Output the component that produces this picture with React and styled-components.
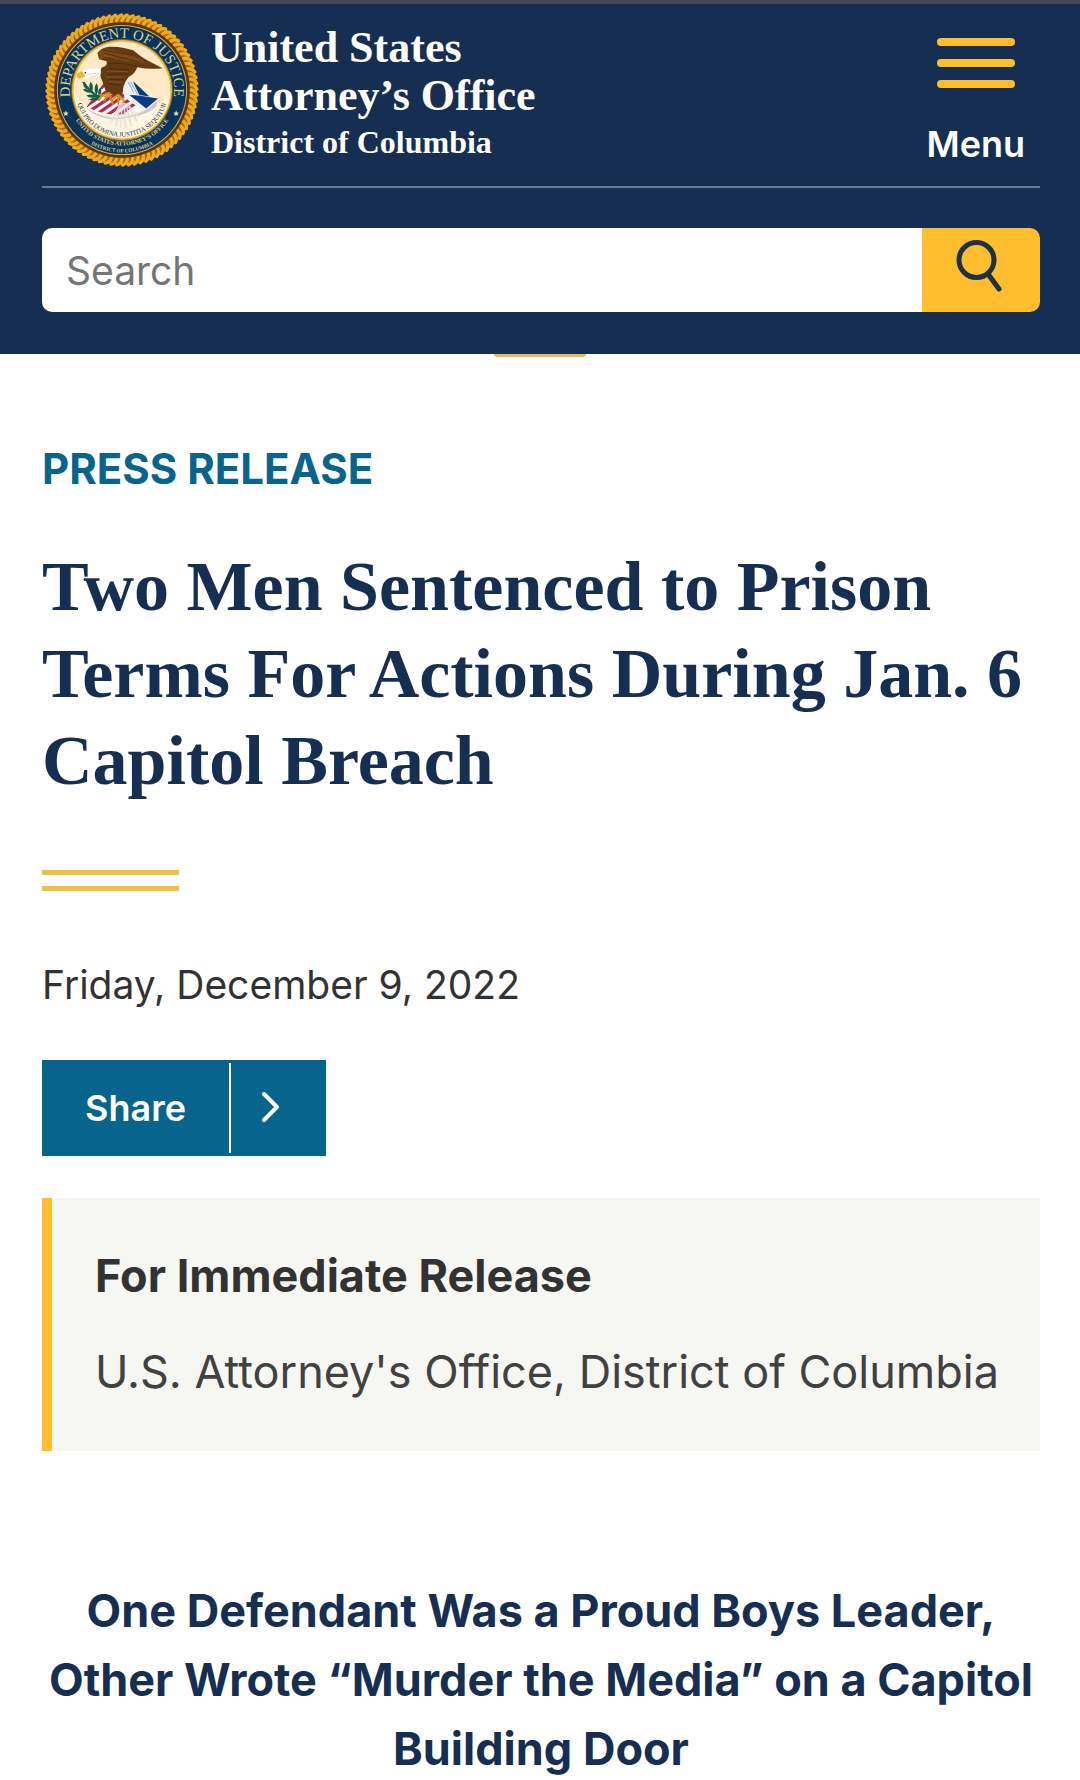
import React from "react";
import styled, { createGlobalStyle } from "styled-components";

const sans = `Inter, "Liberation Sans", sans-serif`;
const serif = `"Liberation Serif", "Times New Roman", serif`;

const color = {
  navy: "#162e51",
  gold: "#ffbe2e",
  teal: "#07648d",
  ink: "#323232",
};

const GlobalStyle = createGlobalStyle`
  *, *::before, *::after { box-sizing: border-box; }
  body { margin: 0; background: #fff; font-family: ${sans}; color: ${color.ink}; }
  h1, h2, p { margin: 0; }
`;

const Header = styled.header`
  background: ${color.navy};
  border-top: 4px solid #454759;
  padding: 0 40px 42px 42px;
`;

const Masthead = styled.div`
  display: flex;
  justify-content: space-between;
  align-items: flex-start;
  height: 184px;
  border-bottom: 2px solid #6d7c94;
`;

const Brand = styled.a`
  display: flex;
  gap: 12px;
  padding: 8px 0 0 3px;
  color: #fff;
  text-decoration: none;
`;

const SealSvg = styled.svg`
  display: block;
  width: 154px;
  height: 156px;
  flex: none;
`;

const BrandText = styled.span`
  display: flex;
  flex-direction: column;
  padding-top: 12px;
  font-family: ${serif};
  font-weight: 700;
`;

const OfficeName = styled.span`
  font-size: 44px;
  line-height: 48px;
`;

const DistrictName = styled.span`
  font-size: 32px;
  line-height: 44px;
`;

const MenuButton = styled.button`
  display: flex;
  flex-direction: column;
  align-items: center;
  gap: 34px;
  margin: 0;
  padding: 34px 15px 0;
  border: 0;
  background: none;
  color: #fff;
  font-family: ${sans};
  font-size: 36px;
  font-weight: 600;
  line-height: 44px;
`;

const MenuBars = styled.span`
  display: flex;
  flex-direction: column;
  gap: 13px;
`;

const MenuBar = styled.span`
  width: 78px;
  height: 8px;
  border-radius: 4px;
  background: ${color.gold};
`;

const SearchForm = styled.form`
  display: flex;
  height: 84px;
  margin-top: 40px;
  border-radius: 10px;
  overflow: hidden;
`;

const SearchInput = styled.input`
  flex: 1;
  min-width: 0;
  border: 0;
  padding: 0 24px;
  background: #fff;
  color: ${color.ink};
  font-family: ${sans};
  font-size: 39px;
  &::placeholder { color: #757575; opacity: 1; }
`;

const SearchButton = styled.button`
  padding: 12px 0 0 34px;
  width: 118px;
  border: 0;
  background: ${color.gold};
  color: #1f3040;
`;

const SearchIcon = styled.svg`
  display: block;
  width: 46px;
  height: 72px;
`;

const Tab = styled.div`
  width: 92px;
  height: 3px;
  margin: 0 auto;
  border-radius: 0 0 3px 3px;
  background: #e5bd58;
`;

const Main = styled.main`
  padding: 86px 40px 0 42px;
`;

const Kicker = styled.p`
  color: ${color.teal};
  font-size: 42px;
  font-weight: 700;
  line-height: 52px;
`;

const Title = styled.h1`
  margin-top: 48px;
  color: ${color.navy};
  font-family: ${serif};
  font-size: 70px;
  font-weight: 700;
  line-height: 87px;
`;

const DoubleRule = styled.div`
  width: 137px;
  height: 21px;
  margin-top: 66px;
  border: solid #f2be3c;
  border-width: 5px 0;
`;

const PostDate = styled.p`
  margin-top: 68px;
  font-size: 39px;
  line-height: 52px;
`;

const ShareButton = styled.button`
  display: flex;
  align-items: center;
  height: 96px;
  margin-top: 49px;
  padding: 3px 0;
  border: 0;
  background: ${color.teal};
  color: #fff;
  font-family: ${sans};
  font-size: 36px;
  font-weight: 600;
`;

const ShareLabel = styled.span`
  display: flex;
  align-items: center;
  height: 100%;
  padding: 0 43px;
  border-right: 2px solid #fff;
`;

const ShareArrow = styled.svg`
  display: block;
  width: 95px;
  height: 36px;
`;

const Notice = styled.section`
  margin-top: 42px;
  padding: 48px 40px 49px 43px;
  border-left: 10px solid ${color.gold};
  background: #f6f6f2;
`;

const NoticeTitle = styled.h2`
  font-size: 45px;
  font-weight: 700;
  line-height: 60px;
`;

const NoticeText = styled.p`
  margin-top: 36px;
  color: #414141;
  font-size: 45px;
  line-height: 60px;
`;

const Subtitle = styled.h2`
  margin-top: 125px;
  color: ${color.navy};
  font-size: 45px;
  font-weight: 700;
  line-height: 69px;
  text-align: center;
`;

const polar = (r, deg) => {
  const a = (deg * Math.PI) / 180;
  return `${(279 + r * Math.cos(a)).toFixed(1)} ${(271 + r * Math.sin(a)).toFixed(1)}`;
};

const strands = Array.from({ length: 80 }, (_, i) => {
  const a = i * 4.5;
  return `M${polar(209, a)} Q${polar(222, a + 0.5)} ${polar(227, a + 4)}`;
}).join(" ");

function Seal() {
  return (
    <SealSvg viewBox="46 38 466 466" role="img" aria-label="Department of Justice seal">
      <defs>
        <path id="arcTitle" d={`M${polar(158, 150)} A158 158 0 1 1 ${polar(158, 30)}`} />
        <path id="arcName" d="M111 271 A168 168 0 0 0 447 271" />
        <path id="arcDistrict" d="M90 271 A189 189 0 0 0 468 271" />
        <path id="arcMotto" d={`M${polar(141, 200)} A141 141 0 1 0 ${polar(141, -20)}`} />
        <clipPath id="shieldClip">
          <path d="M172 322 L222 252 L296 258 L388 297 Q368 328 306 343 Q230 354 172 322Z" />
        </clipPath>
      </defs>
      <circle cx="279" cy="271" r="227" fill="#a8690f" />
      <path d={strands} fill="none" stroke="#eeaa1f" strokeWidth="10" strokeLinecap="round" />
      <circle cx="279" cy="271" r="205" fill="#5c3410" />
      <circle cx="279" cy="271" r="197" fill="#d3b24c" />
      <circle cx="279" cy="271" r="194" fill="#06345c" />
      <circle cx="279" cy="271" r="154" fill="#8a6a22" />
      <circle cx="279" cy="271" r="151" fill="#efba3a" />
      <circle cx="279" cy="271" r="146" fill="#ffe9c6" />
      <path d="M133 271 A146 146 0 0 0 425 271 Q400 340 279 350 Q158 340 133 271Z" fill="#fff6e2" />

      <path d="M170 320 Q190 348 260 355 Q350 352 388 297 L382 322 Q350 352 262 360 Q190 356 170 320Z" fill="#c9cbd3" />
      <g clipPath="url(#shieldClip)">
        <path d="M160 240 H400 V365 H160Z" fill="#fff" />
        <g stroke="#b52a50" strokeWidth="10">
          <path d="M160 304 L250 240" />
          <path d="M168 321 L276 246" />
          <path d="M182 334 L300 256" />
          <path d="M204 343 L306 274" />
          <path d="M230 350 L316 290" />
          <path d="M262 352 L330 304" />
        </g>
        <path d="M280 250 L400 290 L350 335 L312 312 L286 292Z" fill="#f4f4f4" />
      </g>
      <path d="M298 284 L330 288 L388 297 L352 327 L324 304Z" fill="#0a3b80" />
      <path d="M312 244 L362 291 L326 285Z" fill="#0a3b80" />
      <path d="M290 236 L312 247 L332 287 L292 286 L281 270Z" fill="#eef1f4" />
      <path d="M297 246 L314 278 M305 246 L326 284" stroke="#7f93ad" strokeWidth="2.500" />

      <g fill="#126049">
        <path d="M208 298 Q180 280 158 247 L165 246 Q182 272 212 290Z" />
        <path d="M184 246 Q174 264 188 277 Q196 258 184 246Z" />
        <path d="M202 250 Q190 268 202 286 Q211 266 202 250Z" />
        <path d="M161 268 Q168 282 189 279 Q180 266 161 268Z" />
        <path d="M171 288 Q182 299 203 292 Q190 280 171 288Z" />
        <path d="M179 300 Q196 308 214 295 Q194 290 179 300Z" />
        <path d="M214 264 Q204 274 208 292 Q221 280 214 264Z" />
        <path d="M162 248 Q160 263 174 270 Q176 254 162 248Z" />
      </g>

      <path d="M205 159 Q216 143 240 140 Q262 139 285 144 L313 151 Q334 170 355 181 L402 205 Q360 210 325 202 Q320 220 300 231 Q286 246 282 269 L280 290 Q268 300 250 282 L238 288 Q226 268 219 243 Q209 227 217 204 Q238 196 232 184 L210 178Z" fill="#643a12" />
      <path d="M205 159 Q219 143 238 146 L284 159 Q320 168 354 190 Q308 190 280 176 Q244 166 210 178Z" fill="#7b4918" />
      <path d="M222 150 L310 166 M226 160 L332 187 M238 190 Q290 188 326 201 M240 205 L300 210 M232 224 L296 222 M240 238 L283 240 M242 252 L276 256" stroke="#3f220b" strokeWidth="2" fill="none" />
      <path d="M225 166 L298 184 M232 214 L298 216 M230 232 L286 232 M240 246 L280 248" stroke="#94602a" strokeWidth="2" fill="none" />
      <path d="M151 215 Q172 205 210 205 Q219 216 211 228 Q194 238 166 235 L152 231Z" fill="#fff" />
      <path d="M182 233 Q202 231 211 218 M177 224 L202 220" stroke="#c5cad1" strokeWidth="2.500" fill="none" />
      <path d="M157 213 L141 224 Q141 234 147 237 L169 230Z" fill="#e8b634" />
      <circle cx="168" cy="219" r="2.500" fill="#3b2a15" />
      <path d="M240 280 L216 290 L209 301 M240 281 L225 302 M242 281 L246 302 M265 286 L249 302 L250 312 M268 287 L268 313 M270 287 L284 302 L284 312 M213 285 L232 292" stroke="#d38b21" strokeWidth="6" fill="none" strokeLinecap="round" />
      <path d="M220 291 L237 283 M264 292 L254 305 M272 292 L279 305" stroke="#f7cf6c" strokeWidth="2" />
      <g stroke="#e9e2df" strokeWidth="5" opacity="0.850">
        <path d="M276 308 L248 366" />
        <path d="M277 309 L259 378" />
        <path d="M280 310 L274 386" />
        <path d="M285 310 L291 386" />
        <path d="M290 310 L307 378" />
        <path d="M294 312 L323 366" />
        <path d="M297 316 L332 352" />
      </g>
      <path d="M248 366 L270 318 M263 382 L278 320 M285 388 V320 M306 382 L293 320 M327 366 L300 324" stroke="#bcb4b2" strokeWidth="1.500" strokeDasharray="3 3" />

      <g fontFamily={serif} textAnchor="middle">
        <text fontSize="44" fill="#e0d08a">
          <textPath href="#arcTitle" startOffset="50%">DEPARTMENT OF JUSTICE</textPath>
        </text>
        <text fontSize="18" fontWeight="700" fill="#e0d08a">
          <textPath href="#arcName" startOffset="50%">UNITED STATES ATTORNEY’S OFFICE</textPath>
        </text>
        <text fontSize="16" fontWeight="700" fill="#e0d08a">
          <textPath href="#arcDistrict" startOffset="50%">DISTRICT OF COLUMBIA</textPath>
        </text>
        <text fontSize="20" fill="#1d2f3d">
          <textPath href="#arcMotto" startOffset="50%">QUI PRO DOMINA JUSTITIA SEQUITUR</textPath>
        </text>
      </g>
      <g fill="#efdf9a">
        <path d="M109 333 l2.500 6 6.500 .5 -5 4 1.600 6.500 -5.600 -3.500 -5.600 3.500 1.600 -6.500 -5 -4 6.500 -.5Z" />
        <path d="M443 333 l2.500 6 6.500 .5 -5 4 1.600 6.500 -5.600 -3.500 -5.600 3.500 1.600 -6.500 -5 -4 6.500 -.5Z" />
      </g>
    </SealSvg>
  );
}

export default function App() {
  return (
    <>
      <GlobalStyle />
      <Header>
        <Masthead>
          <Brand href="#home">
            <Seal />
            <BrandText>
              <OfficeName>United States</OfficeName>
              <OfficeName>Attorney’s Office</OfficeName>
              <DistrictName>District of Columbia</DistrictName>
            </BrandText>
          </Brand>
          <MenuButton type="button">
            <MenuBars aria-hidden="true">
              <MenuBar />
              <MenuBar />
              <MenuBar />
            </MenuBars>
            Menu
          </MenuButton>
        </Masthead>
        <SearchForm role="search" onSubmit={(e) => e.preventDefault()}>
          <SearchInput type="search" aria-label="Search" placeholder="Search" />
          <SearchButton type="submit" aria-label="Search">
            <SearchIcon viewBox="0 0 46 72" fill="none" stroke="currentColor" strokeWidth="5" strokeLinecap="round" aria-hidden="true">
              <circle cx="20.500" cy="20" r="17.500" />
              <path d="M32 34 L43 49" />
            </SearchIcon>
          </SearchButton>
        </SearchForm>
      </Header>
      <Tab />
      <Main>
        <Kicker>PRESS RELEASE</Kicker>
        <Title>Two Men Sentenced to Prison Terms For Actions During Jan. 6 Capitol Breach</Title>
        <DoubleRule />
        <PostDate>Friday, December 9, 2022</PostDate>
        <ShareButton type="button">
          <ShareLabel>Share</ShareLabel>
          <ShareArrow viewBox="0 0 95 36" fill="none" stroke="currentColor" strokeWidth="4" strokeLinecap="round" strokeLinejoin="round" aria-hidden="true">
            <path d="M33 4 L46 17 L33 30" />
          </ShareArrow>
        </ShareButton>
        <Notice>
          <NoticeTitle>For Immediate Release</NoticeTitle>
          <NoticeText>U.S. Attorney's Office, District of Columbia</NoticeText>
        </Notice>
        <Subtitle>One Defendant Was a Proud Boys Leader, Other Wrote “Murder the Media” on a Capitol Building Door</Subtitle>
      </Main>
    </>
  );
}
